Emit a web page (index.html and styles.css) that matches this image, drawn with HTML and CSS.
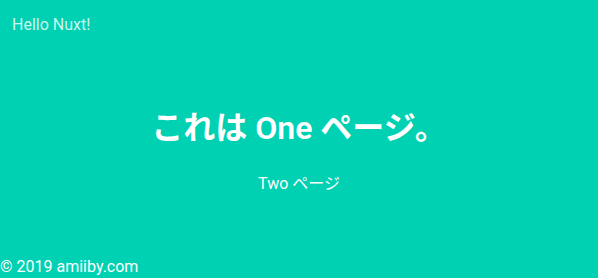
FILE: index.html
```html
<!DOCTYPE html>
<html lang="ja">
<head>
    <meta charset="UTF-8">
    <meta name="viewport" content="width=device-width, initial-scale=1.0">
    <title>One ページ</title>
    <link rel="stylesheet" href="styles.css">
</head>
<body>
    <div class="layout">
        <header class="site-header">Hello Nuxt!</header>
        <main class="page">
            <h1 class="title">これは One ページ。</h1>
            <a class="page-link" href="#">Two ページ</a>
        </main>
        <footer class="site-footer">© 2019 amiiby.com</footer>
    </div>
</body>
</html>
```

FILE: styles.css
```css
html, body {
    margin: 0;
    height: 100%;
}
body {
    font-family: Roboto, "Noto Sans CJK JP", sans-serif;
    background-color: #00d1b2;
    color: #fff;
}
.layout {
    display: flex;
    flex-direction: column;
    height: 100%;
}
.site-header {
    padding: 15px 12px 0;
    font-size: 16px;
    color: #c9f7ee;
}
.page {
    flex: 1;
    display: flex;
    flex-direction: column;
    align-items: center;
    padding-top: 72px;
}
.title {
    margin: 0;
    font-size: 32px;
    font-weight: 600;
    line-height: 44px;
}
.page-link {
    margin-top: 20px;
    font-size: 16px;
    color: #fff;
    text-decoration: none;
}
.site-footer {
    padding: 0 0 2px 0;
    font-size: 16px;
}
```
